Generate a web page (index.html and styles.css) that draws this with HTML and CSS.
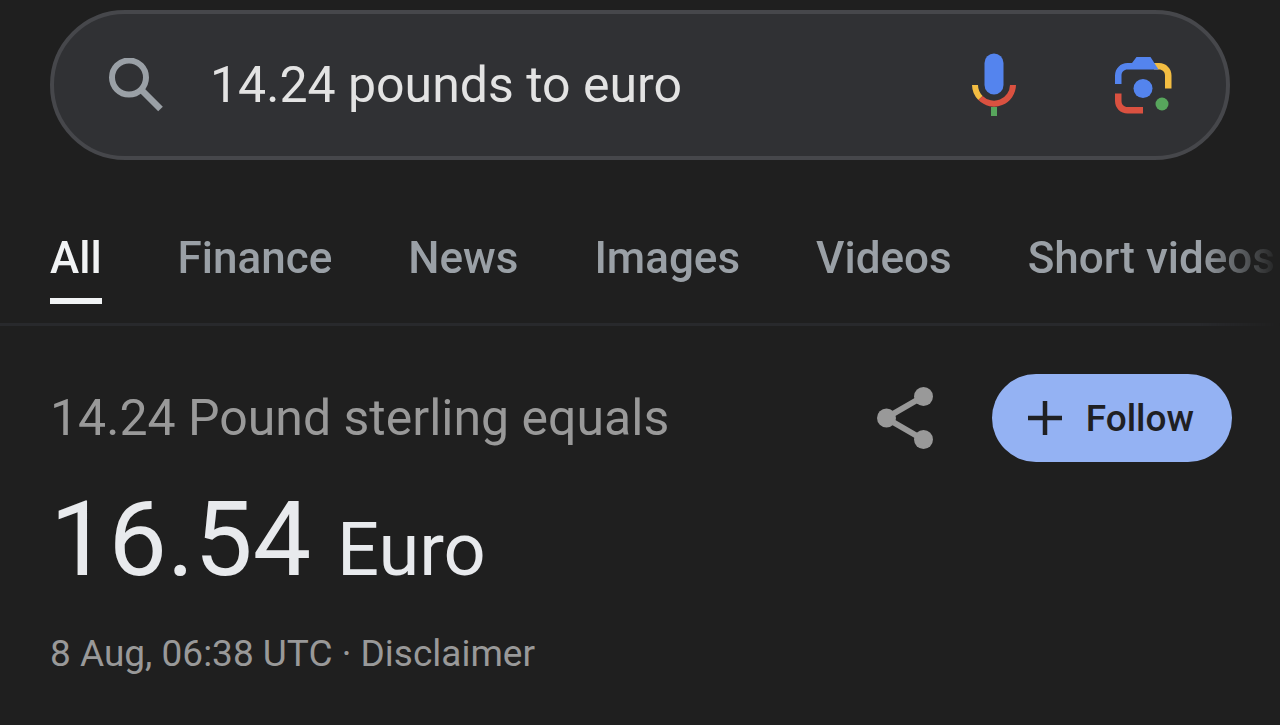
FILE: index.html
```html
<!DOCTYPE html>
<html lang="en">
<head>
  <meta charset="UTF-8">
  <meta name="viewport" content="width=device-width, initial-scale=1">
  <title>14.24 pounds to euro</title>
  <link rel="stylesheet" href="styles.css">
</head>
<body>
  <!-- Search box -->
  <form class="search-box">
    <button type="submit" class="icon-button" aria-label="Search">
      <svg width="54" height="54" viewBox="0 0 54 54" fill="none" stroke="#9aa0a6" stroke-width="6">
        <circle cx="20" cy="19.500" r="17"/>
        <path stroke-width="6.500" d="M32 31.500L51.500 51"/>
      </svg>
    </button>
    <input type="text" class="search-input" aria-label="Search query" value="14.24 pounds to euro">
    <button type="button" class="icon-button" aria-label="Voice search">
      <svg width="44" height="64" viewBox="0 0 44 64" fill="none">
        <rect x="12.500" y="0.500" width="19" height="41" rx="9.500" fill="#5484ee"/>
        <path d="M3 32A19 19 0 0 0 8.500 45" stroke="#f3bd42" stroke-width="6"/>
        <path d="M8.500 45A19 19 0 0 0 41 32" stroke="#da5140" stroke-width="6"/>
        <path d="M19 54h6v9h-6z" fill="#57a55c"/>
      </svg>
    </button>
    <button type="button" class="icon-button" aria-label="Search by image">
      <svg width="57" height="57" viewBox="0 0 57 57" fill="none">
        <path d="M39 6h5c7 0 12.500 5.500 12.500 12.500v13h-6.500v-13c0-3.500-2.500-6-6-6h-5z" fill="#f3bd42"/>
        <path d="M0 27v-8.500C0 11.500 5.500 6 12.500 6H17l4.500-6h14L43.500 12.500h-31c-3.500 0-6 2.500-6 6V27z" fill="#5484ee"/>
        <path d="M0 36.500h6.500v7.500c0 3.500 2.500 6 6 6H28v6.500H12.500C5.500 56.500 0 51 0 44z" fill="#da5140"/>
        <circle cx="28" cy="31.500" r="9.500" fill="#5484ee"/>
        <circle cx="47" cy="47" r="6.500" fill="#57a55c"/>
      </svg>
    </button>
  </form>

  <!-- Result type tabs -->
  <nav class="tabs">
    <a href="#" class="tab active">All</a>
    <a href="#" class="tab">Finance</a>
    <a href="#" class="tab">News</a>
    <a href="#" class="tab">Images</a>
    <a href="#" class="tab">Videos</a>
    <a href="#" class="tab">Short videos</a>
  </nav>

  <!-- Currency result -->
  <main class="result">
    <div class="result-top">
      <h2 class="source">14.24 Pound sterling equals</h2>
      <button type="button" class="icon-button" aria-label="Share">
        <svg width="56" height="62" viewBox="0 0 56 62" fill="#999">
          <path d="M47 9L9 31l38 22" fill="none" stroke="#999" stroke-width="6"/>
          <circle cx="9.500" cy="31" r="9.500"/>
          <circle cx="46.500" cy="9.500" r="9.500"/>
          <circle cx="46.500" cy="52.500" r="9.500"/>
        </svg>
      </button>
      <button type="button" class="follow-button">
        <svg width="34" height="34" viewBox="0 0 34 34" stroke="#1f2023" stroke-width="4.500">
          <path d="M17 0v34M0 17h34"/>
        </svg>
        Follow
      </button>
    </div>
    <p class="amount">16.54 <span class="currency">Euro</span></p>
    <p class="meta">8 Aug, 06:38 UTC · <a href="#">Disclaimer</a></p>
  </main>
</body>
</html>
```

FILE: styles.css
```css
/* Basic reset */
* {
  box-sizing: border-box;
  margin: 0;
  padding: 0;
}

body {
  background-color: #1f1f1f;
  color: #e8eaed;
  font-family: Roboto, Arial, sans-serif;
  overflow-x: hidden;
}

a {
  color: inherit;
  text-decoration: none;
}

svg {
  display: block;
}

.icon-button {
  flex: none;
  border: none;
  background: none;
  cursor: pointer;
}

/* Search box */
.search-box {
  display: flex;
  align-items: center;
  height: 150px;
  margin: 10px 50px 0;
  padding: 0 54px 0 55px;
  background-color: #303134;
  border: 4px solid #46474b;
  border-radius: 75px;
}

.search-input {
  flex: 1;
  min-width: 0;
  margin: 0 47px;
  border: none;
  outline: none;
  background: none;
  color: #e3e3e3;
  font-family: inherit;
  font-size: 50px;
  line-height: 60px;
}

.search-input + .icon-button {
  margin-right: 99px;
}

/* Tabs */
.tabs {
  display: flex;
  gap: 76px;
  margin-top: 64px;
  padding: 0 0 19px 50px;
  border-bottom: 3px solid #28292c;
  overflow: hidden;
  white-space: nowrap;
  -webkit-mask-image: linear-gradient(to left, transparent, #000 80px);
  mask-image: linear-gradient(to left, transparent, #000 80px);
}

.tab {
  flex: none;
  padding: 6px 0 12px;
  border-bottom: 6px solid transparent;
  color: #9aa0a6;
  font-size: 44px;
  font-weight: 500;
  line-height: 56px;
}

.tab.active {
  color: #f1f3f4;
  border-bottom-color: #f1f3f4;
}

/* Result */
.result {
  padding: 48px 48px 40px 50px;
}

.result-top {
  display: flex;
  align-items: center;
}

.source {
  flex: 1;
  color: #999;
  font-size: 50px;
  font-weight: 400;
  line-height: 60px;
}

.follow-button {
  display: flex;
  align-items: center;
  gap: 24px;
  height: 88px;
  margin-left: 59px;
  padding: 0 38px 0 36px;
  border: none;
  border-radius: 44px;
  background-color: #94b2f3;
  color: #1f2023;
  font-family: inherit;
  font-size: 37px;
  font-weight: 500;
  cursor: pointer;
}

.amount {
  margin-top: 16px;
  font-size: 104px;
  line-height: 124px;
}

.currency {
  font-size: 74px;
}

.meta {
  margin-top: 20px;
  color: #999;
  font-size: 37px;
  line-height: 44px;
}
```
